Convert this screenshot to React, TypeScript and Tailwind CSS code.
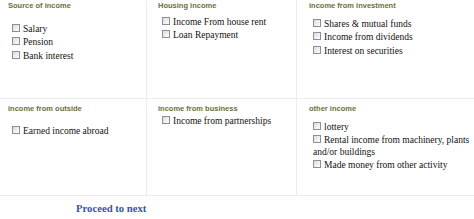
import React from "react";

const serif = { fontFamily: '"Liberation Serif", "Times New Roman", serif' };
const sans = { fontFamily: '"Liberation Sans", Arial, sans-serif' };

function Box() {
  return (
    <span className="inline-block w-[8px] h-[8px] border border-[#8a8f99] bg-linear-to-br from-[#d8dbe0] to-white align-baseline mr-[3px]" />
  );
}

function Header({ children }: { children: React.ReactNode }) {
  return (
    <div style={sans} className="text-[7.5px] leading-[10px] font-bold text-[#6e6e3c] whitespace-nowrap">
      {children}
    </div>
  );
}

function Items({ items, mt, lh }: { items: string[]; mt: string; lh: string }) {
  return (
    <div style={serif} className={`text-[9.5px] text-[#111] pl-[4px] ${mt} ${lh}`}>
      {items.map((t) => (
        <div key={t}>
          <Box />
          {t}
        </div>
      ))}
    </div>
  );
}

export default function App() {
  return (
    <div className="w-[474px] h-[219px] bg-white overflow-hidden">
      <div className="grid grid-cols-[147px_150px_177px]">
        {/* Row 1 */}
        <div className="h-[99px] border-r border-b border-[#ececec] pl-[8px] pt-[0.5px]">
          <Header>Source of income</Header>
          <Items items={["Salary", "Pension", "Bank interest"]} mt="mt-[12px]" lh="leading-[13.6px]" />
        </div>
        <div className="h-[99px] border-r border-b border-[#ececec] pl-[11px] pt-[0.5px]">
          <Header>Housing income</Header>
          <Items items={["Income From house rent", "Loan Repayment"]} mt="mt-[5px]" lh="leading-[13.4px]" />
        </div>
        <div className="h-[99px] border-b border-[#ececec] pl-[12px] pt-[0.5px]">
          <Header>income from investment</Header>
          <Items
            items={["Shares & mutual funds", "Income from dividends", "Interest on securities"]}
            mt="mt-[7px]"
            lh="leading-[13.5px]"
          />
        </div>
        {/* Row 2 */}
        <div className="h-[97px] border-r border-b border-[#ececec] pl-[8px] pt-[4.5px]">
          <Header>income from outside</Header>
          <Items items={["Earned income abroad"]} mt="mt-[11.5px]" lh="leading-[13.5px]" />
        </div>
        <div className="h-[97px] border-r border-b border-[#ececec] pl-[11px] pt-[4.5px]">
          <Header>income from business</Header>
          <Items items={["Income from partnerships"]} mt="mt-[1px]" lh="leading-[13.5px]" />
        </div>
        <div className="h-[97px] border-b border-[#ececec] pl-[12px] pt-[4.5px]">
          <Header>other income</Header>
          <Items
            items={["lottery", "Rental income from machinery, plants and/or buildings", "Made money from other activity"]}
            mt="mt-[7.5px]"
            lh="leading-[12.7px]"
          />
        </div>
      </div>
      <div
        style={serif}
        className="pl-[76px] mt-[5px] text-[10.7px] leading-[14px] font-bold text-[#3556a6]"
      >
        Proceed to next
      </div>
    </div>
  );
}
